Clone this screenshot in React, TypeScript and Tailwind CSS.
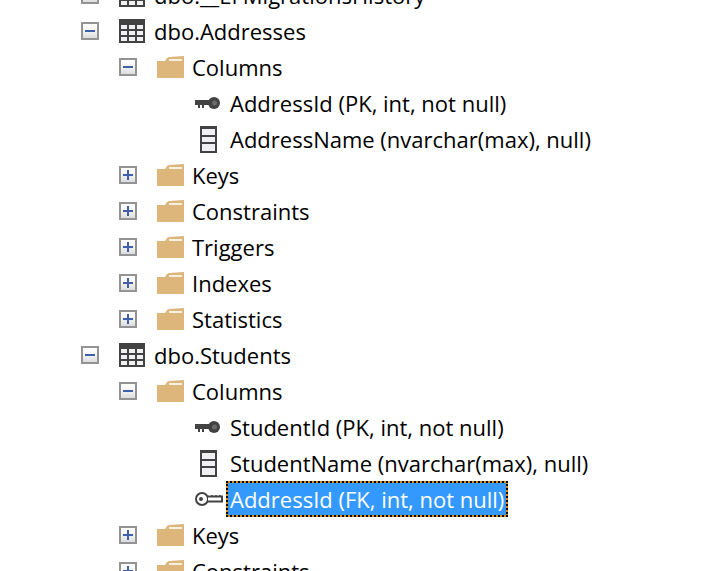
import React from 'react';

type IconName = 'table' | 'folder' | 'pk' | 'fk' | 'column';

const TableIcon = () => (
  <svg width="26" height="24" viewBox="0 0 26 24">
    <rect x="0" y="0" width="26" height="24" fill="#424242" />
    <g fill="#f0eff1">
      <rect x="2" y="6" width="6" height="4" />
      <rect x="10" y="6" width="6" height="4" />
      <rect x="18" y="6" width="6" height="4" />
      <rect x="2" y="12" width="6" height="4" />
      <rect x="10" y="12" width="6" height="4" />
      <rect x="18" y="12" width="6" height="4" />
      <rect x="2" y="18" width="6" height="4" />
      <rect x="10" y="18" width="6" height="4" />
      <rect x="18" y="18" width="6" height="4" />
    </g>
  </svg>
);

const FolderIcon = () => (
  <svg width="27" height="23" viewBox="0 0 27 23">
    <path d="M0 5 L8 5 L10 2 L12 1 L27 0 L27 22 L0 22 Z" fill="#dcb67a" />
    <rect x="12" y="3" width="13" height="2" fill="#f5efe0" />
  </svg>
);

const PkIcon = () => (
  <svg width="26" height="14" viewBox="0 0 26 14">
    <path d="M0 4 H14 V9 H9 V12 H7 V9 H5 V12 H3 V9 H0 Z" fill="#424242" />
    <circle cx="19" cy="7" r="6" fill="#424242" />
    <circle cx="19.5" cy="7" r="2.5" fill="#6b6b6b" />
  </svg>
);

const FkIcon = () => (
  <svg width="29" height="16" viewBox="0 0 29 16">
    <circle cx="8" cy="8" r="6" fill="#fff" stroke="#424242" strokeWidth="2" />
    <circle cx="7" cy="8" r="2" fill="#424242" />
    <path d="M14 5.5 H28 V10.5 H14" fill="#fff" stroke="#424242" strokeWidth="2" />
    <path d="M18 4 V6 M22 4 V6 M26 4 V6" stroke="#424242" strokeWidth="1.5" />
  </svg>
);

const ColumnIcon = () => (
  <svg width="17" height="27" viewBox="0 0 17 27">
    <rect x="0" y="0" width="17" height="27" fill="#424242" />
    <rect x="2" y="3" width="13" height="6" fill="#f0eff1" />
    <rect x="2" y="11" width="13" height="5" fill="#f0eff1" />
    <rect x="2" y="18" width="13" height="7" fill="#f0eff1" />
  </svg>
);

const Expander = ({ open }: { open: boolean }) => (
  <div className="relative w-[18px] h-[18px] border-2 border-[#939393] bg-gradient-to-b from-white via-[#f4f4f4] to-[#dcdcdc]">
    <div className="absolute left-[2px] top-[6px] w-[10px] h-[2px] bg-[#3f5fad]"></div>
    {!open && <div className="absolute left-[6px] top-[2px] w-[2px] h-[10px] bg-[#3f5fad]"></div>}
  </div>
);

const icons: Record<IconName, React.ReactNode> = {
  table: <TableIcon />,
  folder: <FolderIcon />,
  pk: <PkIcon />,
  fk: <FkIcon />,
  column: <ColumnIcon />,
};

interface RowProps {
  level: 0 | 1 | 2;
  icon: IconName;
  label: string;
  open?: boolean;
  selected?: boolean;
}

const Row: React.FC<RowProps> = ({ level, icon, label, open, selected }) => {
  const indent = level === 0 ? 'pl-[81px]' : level === 1 ? 'pl-[119px]' : 'pl-[157px]';
  return (
    <div className={`flex items-center h-[36px] ${indent}`}>
      <div className="w-[18px] shrink-0">{open !== undefined && <Expander open={open} />}</div>
      <div className="w-[34px] ml-[16px] mr-[5px] shrink-0 flex justify-center items-center h-[36px]">
        {icons[icon]}
      </div>
      {selected ? (
        <span className="ml-[-4px] bg-[#d98a1c] flex">
          <span className="h-[36px] px-[2px] border-2 border-dotted border-black bg-[#3399ff] bg-clip-padding text-white flex items-center whitespace-nowrap">
            {label}
          </span>
        </span>
      ) : (
        <span className="whitespace-nowrap text-black">{label}</span>
      )}
    </div>
  );
};

export default function App() {
  return (
    <div className="w-[728px] h-[571px] overflow-hidden bg-white font-['Open_Sans',sans-serif] text-[22px]">
      <div className="-mt-[23px]">
        <Row level={0} icon="table" label="dbo.__EFMigrationsHistory" open={false} />
        <Row level={0} icon="table" label="dbo.Addresses" open={true} />
        <Row level={1} icon="folder" label="Columns" open={true} />
        <Row level={2} icon="pk" label="AddressId (PK, int, not null)" />
        <Row level={2} icon="column" label="AddressName (nvarchar(max), null)" />
        <Row level={1} icon="folder" label="Keys" open={false} />
        <Row level={1} icon="folder" label="Constraints" open={false} />
        <Row level={1} icon="folder" label="Triggers" open={false} />
        <Row level={1} icon="folder" label="Indexes" open={false} />
        <Row level={1} icon="folder" label="Statistics" open={false} />
        <Row level={0} icon="table" label="dbo.Students" open={true} />
        <Row level={1} icon="folder" label="Columns" open={true} />
        <Row level={2} icon="pk" label="StudentId (PK, int, not null)" />
        <Row level={2} icon="column" label="StudentName (nvarchar(max), null)" />
        <Row level={2} icon="fk" label="AddressId (FK, int, not null)" selected />
        <Row level={1} icon="folder" label="Keys" open={false} />
        <Row level={1} icon="folder" label="Constraints" open={false} />
      </div>
    </div>
  );
}
